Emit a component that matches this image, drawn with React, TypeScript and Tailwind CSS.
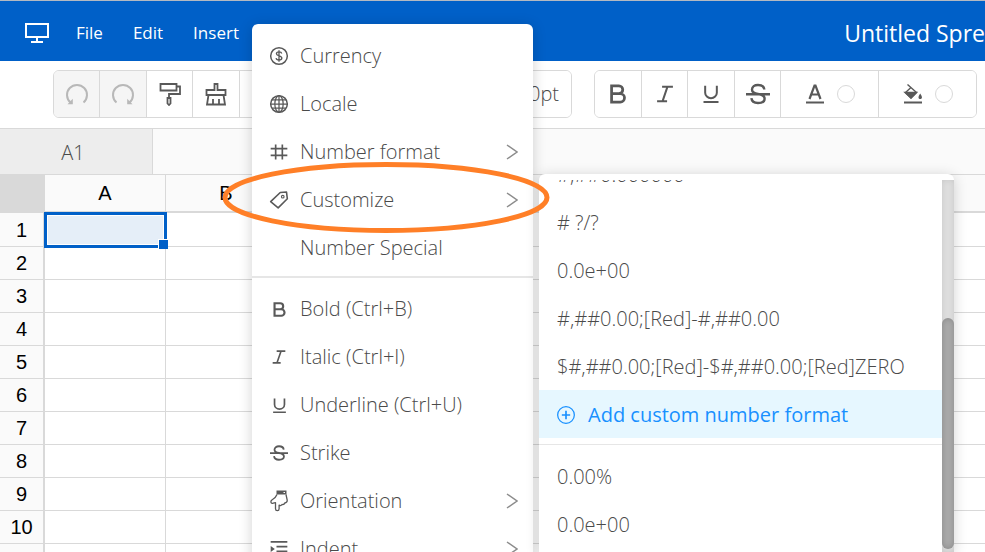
import type { ReactNode } from "react";
import clsx from "clsx";

const UI_FONT = "font-['Open_Sans','Noto_Sans',sans-serif]";
const GRID_FONT = "font-['Liberation_Sans',Arial,sans-serif]";

const COLUMNS = ["A", "B", "C", "D", "E", "F", "G"];
const ROWS = [1, 2, 3, 4, 5, 6, 7, 8, 9, 10];

/* ---------- icons ---------- */

function Icon({ size = 20, className, children }: { size?: number; className?: string; children: ReactNode }) {
  return (
    <svg
      width={size}
      height={size}
      viewBox="0 0 24 24"
      fill="none"
      stroke="currentColor"
      strokeWidth="1.8"
      className={clsx("shrink-0", className)}
      aria-hidden="true"
    >
      {children}
    </svg>
  );
}

const MonitorIcon = () => (
  <svg width="24" height="20" viewBox="0 0 24 20" fill="none" stroke="currentColor" strokeWidth="2" aria-hidden="true">
    <path d="M1 1h22v13H1zM12 14v5M6 19h12" />
  </svg>
);

const UndoIcon = () => (
  <Icon size={24}>
    <path d="M18.5 20.500a10 10 0 1 0-13 0" strokeWidth="2" />
    <path d="M7.800 16.800v5.400H2.500z" fill="currentColor" stroke="none" />
  </Icon>
);

const RedoIcon = () => (
  <Icon size={24}>
    <path d="M5.500 20.500a10 10 0 1 1 13 0" strokeWidth="2" />
    <path d="M16.200 16.800v5.400h5.300z" fill="currentColor" stroke="none" />
  </Icon>
);

const RollerIcon = () => (
  <Icon size={24}>
    <path d="M2.500 2h16v6.500h-16zM18.500 4.500H22V12H11v4M9.500 16h3v5.500l-1.500 1.500-1.500-1.500z" />
  </Icon>
);

const BrushIcon = () => (
  <Icon size={24}>
    <path d="M10.500 2h3v6h8v5h-19V8h8zM4.500 13L3 22.500h18L19.500 13M9 22v-5M15 22v-5" />
  </Icon>
);

const BoldIcon = ({ size }: { size?: number }) => (
  <Icon size={size}>
    <path d="M5 3.200h8a4.200 4.200 0 0 1 0 8.400H5zM5 11.600h9.500a4.600 4.600 0 0 1 0 9.200H5z" strokeWidth="3" />
  </Icon>
);

const ItalicIcon = ({ size }: { size?: number }) => (
  <Icon size={size}>
    <path d="M8.500 3.200h13M2.500 20.800h12M15 3.200L9 20.800" strokeWidth="2.400" />
  </Icon>
);

const UnderlineIcon = ({ size }: { size?: number }) => (
  <Icon size={size}>
    <path d="M5 2v8.500a7 6.500 0 0 0 14 0V2M3 21.500h18" strokeWidth="2.400" />
  </Icon>
);

const StrikeIcon = ({ size }: { size?: number }) => (
  <Icon size={size}>
    <path
      d="M18.300 7.500C18 4.500 15.500 3 12 3S6 4.600 6 7.600s3 4 6 4.400 6.600 1.700 6.600 4.700S15.500 21 12 21s-6.300-1.500-6.600-4.800M0 12.200h24"
      strokeWidth="2.400"
    />
  </Icon>
);

const FontColorIcon = () => (
  <svg width="20" height="20" viewBox="0 0 20 20" fill="none" stroke="currentColor" strokeWidth="2.200" aria-hidden="true">
    <path d="M4.500 15L9.500 1.500h1L15.500 15M6 10.500h8M1 18.500h18" />
  </svg>
);

const FillIcon = () => (
  <svg width="20" height="20" viewBox="0 0 20 20" fill="none" stroke="currentColor" strokeWidth="1.400" aria-hidden="true">
    <path d="M4.500.500l9 8-5.500 5.500-5.500-5.500 5.500-5" />
    <path d="M2 8.500h11.500L8 14z" fill="currentColor" />
    <path d="M17.200 9.500c2.400 3.400 2.200 5.500 0 5.500s-2.400-2.100 0-5.500z" fill="currentColor" stroke="none" />
    <path d="M1 18.500h18" strokeWidth="2.200" />
  </svg>
);

const CurrencyIcon = () => (
  <Icon>
    <circle cx="12" cy="12" r="10" />
    <path d="M15.300 9c-.3-1.400-1.500-2-3.300-2s-3.100.8-3.100 2.300c0 3.300 6.500 1.700 6.500 5.100 0 1.600-1.400 2.500-3.400 2.500s-3.300-.8-3.500-2.300M12 5v14" strokeWidth="1.600" />
  </Icon>
);

const GlobeIcon = () => (
  <Icon>
    <circle cx="12" cy="12" r="10" />
    <ellipse cx="12" cy="12" rx="5" ry="10" strokeWidth="1.500" />
    <path d="M12 2v20M2 12h20M3.500 7h17M3.500 17h17" strokeWidth="1.500" />
  </Icon>
);

const HashIcon = () => (
  <Icon>
    <path d="M8 3v18M16 3v18M2 8h20M2 16h20" strokeWidth="2" />
  </Icon>
);

const TagIcon = () => (
  <Icon>
    <path d="M13.500 3l7.500-.5 1 8L11 21.500 2 14z" strokeWidth="1.900" strokeLinejoin="round" />
    <circle cx="16.500" cy="8" r="1.600" strokeWidth="1.300" />
  </Icon>
);

const OrientationIcon = () => (
  <svg width="18" height="22" viewBox="0 0 18 22" fill="none" stroke="currentColor" aria-hidden="true">
    <path d="M6.500.500h10v4h-10z" fill="currentColor" stroke="none" />
    <path d="M13.500 2.500h1.500" stroke="white" />
    <path
      d="M7 4.500C6 7 5 8.300 2.200 9.800.2 11 .700 13.500 2.500 13.300c1.300-.1 2-.6 3-.7v6.200c0 2.500 3.600 2.500 3.600 0v-3.600c1 .5 2.400.2 2.900-.7 1.300.3 2.400-.3 2.800-1.500 1.400-.3 2.500-1.200 2.400-2.800L16 4.500"
      strokeWidth="1.300"
      strokeLinejoin="round"
    />
  </svg>
);

const IndentIcon = () => (
  <Icon>
    <path d="M2 3.500h20M9 9.200h13M9 14.800h13M2 20.500h20" strokeWidth="2" />
    <path d="M2 8.500l5 3.500-5 3.500z" fill="currentColor" stroke="none" />
  </Icon>
);

const AddIcon = () => (
  <Icon>
    <circle cx="12" cy="12" r="10" strokeWidth="1.500" />
    <path d="M12 7v10M7 12h10" strokeWidth="2" />
  </Icon>
);

const Chevron = () => (
  <svg width="12" height="16" viewBox="0 0 12 16" fill="none" stroke="#8c8c8c" strokeWidth="1.500" aria-hidden="true">
    <path d="M1 1l10 7-10 7" />
  </svg>
);

/* ---------- header and toolbar ---------- */

function Header() {
  return (
    <header className="flex h-[61px] shrink-0 items-center overflow-hidden border-t border-[#b3b9c2] bg-[#0060c8] pl-[25px] pt-1 text-white">
      <MonitorIcon />
      <nav className="ml-[27px] flex gap-[30px] text-[17px]">
        {["File", "Edit", "Insert"].map((name) => (
          <button key={name} type="button">
            {name}
          </button>
        ))}
      </nav>
      <h1 className="ml-auto shrink-0 whitespace-nowrap text-[23px]">Untitled Spre</h1>
    </header>
  );
}

function ToolButton({
  label,
  width = "w-[47px]",
  disabled,
  children,
}: {
  label: string;
  width?: string;
  disabled?: boolean;
  children?: ReactNode;
}) {
  return (
    <button
      type="button"
      aria-label={label}
      disabled={disabled}
      className={clsx(
        "flex shrink-0 items-center justify-center gap-3 border-r border-[#d9d9d9] last:border-r-0",
        width,
        disabled ? "bg-[#f5f5f5] text-[#b8b8b8]" : "bg-white text-[#595959]"
      )}
    >
      {children}
    </button>
  );
}

const Swatch = () => <span className="h-[18px] w-[18px] rounded-full border border-[#d9d9d9]" />;

function Toolbar() {
  const group = "flex h-12 shrink-0 overflow-hidden rounded-md border border-[#d9d9d9]";
  return (
    <div className="flex h-[68px] shrink-0 items-center gap-[22px] overflow-hidden border-b border-[#d9d9d9] bg-white pb-px pl-[53px]">
      <div className={group}>
        <ToolButton label="Undo" width="w-[46px]" disabled>
          <UndoIcon />
        </ToolButton>
        <ToolButton label="Redo" disabled>
          <RedoIcon />
        </ToolButton>
        <ToolButton label="Copy format" width="w-[46px]">
          <RollerIcon />
        </ToolButton>
        <ToolButton label="Clear format">
          <BrushIcon />
        </ToolButton>
        <ToolButton label="Font family" width="w-[230px]" />
        <button type="button" className="w-[101px] bg-white pr-3 text-right text-xl font-light text-[#4a4a4a]">
          10pt
        </button>
      </div>
      <div className={group}>
        <ToolButton label="Bold">
          <BoldIcon size={22} />
        </ToolButton>
        <ToolButton label="Italic" width="w-[46px]">
          <ItalicIcon size={20} />
        </ToolButton>
        <ToolButton label="Underline">
          <UnderlineIcon size={20} />
        </ToolButton>
        <ToolButton label="Strike" width="w-[46px]">
          <StrikeIcon size={24} />
        </ToolButton>
        <ToolButton label="Font color" width="w-[98px]">
          <FontColorIcon />
          <Swatch />
        </ToolButton>
        <ToolButton label="Fill color" width="w-[97px]">
          <FillIcon />
          <Swatch />
        </ToolButton>
      </div>
    </div>
  );
}

/* ---------- sheet ---------- */

function FormulaBar() {
  return (
    <div className="flex h-[46px] shrink-0 border-b border-[#d9d9d9] bg-[#fafafa]">
      <input
        aria-label="Cell reference"
        defaultValue="A1"
        className="w-[153px] border-r border-[#d9d9d9] bg-[#ededed] pr-1.5 pt-0.5 text-center text-xl font-light text-[#4a4a4a] outline-none"
      />
      <input aria-label="Formula" className="min-w-0 flex-1 bg-transparent px-3 text-xl outline-none" />
    </div>
  );
}

function Sheet() {
  return (
    <div className={clsx("min-h-0 flex-1 overflow-hidden bg-white", GRID_FONT)}>
      <table className="w-full min-w-[1013px] table-fixed border-separate border-spacing-0 text-xl leading-6 text-black">
        <thead>
          <tr className="h-[38px]">
            <th className="w-[45px] border-b-2 border-r-2 border-[#d9d9d9] bg-[#d9d9d9] p-0" />
            {COLUMNS.map((c) => (
              <th
                key={c}
                scope="col"
                className="w-[121px] border-b-2 border-r border-[#d9d9d9] bg-[#fafafa] p-0 font-normal last:w-auto"
              >
                {c}
              </th>
            ))}
          </tr>
        </thead>
        <tbody>
          {ROWS.map((r) => (
            <tr key={r} className={r === 1 ? "h-[34px]" : "h-[33px]"}>
              <th scope="row" className="border-b border-r-2 border-[#d9d9d9] bg-[#fafafa] p-0 font-normal">
                {r}
              </th>
              {COLUMNS.map((c) => (
                <td key={c} className="relative border-b border-r border-[#d9d9d9] p-0">
                  {c === "A" && r === 1 && <Selection />}
                </td>
              ))}
            </tr>
          ))}
          {/* row that runs off the bottom of the window */}
          <tr className="h-[33px]">
            <th className="border-r-2 border-[#d9d9d9] bg-[#fafafa]" />
            {COLUMNS.map((c) => (
              <td key={c} className="border-r border-[#d9d9d9]" />
            ))}
          </tr>
        </tbody>
      </table>
    </div>
  );
}

function Selection() {
  return (
    <div className="absolute -bottom-0.5 -left-px -right-0.5 -top-px z-10 border-[3px] border-[#0060c8] bg-white p-px">
      <div className="h-full bg-[#e5eef8]" />
      <span className="absolute -bottom-1 -right-1 h-[10px] w-[10px] border-l border-t border-white bg-[#0060c8]" />
    </div>
  );
}

/* ---------- context menu ---------- */

type Item = { label: string; icon?: ReactNode; sub?: boolean };

const NUMBER_ITEMS: Item[] = [
  { label: "Currency", icon: <CurrencyIcon /> },
  { label: "Locale", icon: <GlobeIcon /> },
  { label: "Number format", icon: <HashIcon />, sub: true },
  { label: "Customize", icon: <TagIcon />, sub: true },
  { label: "Number Special" },
];

const STYLE_ITEMS: Item[] = [
  { label: "Bold (Ctrl+B)", icon: <BoldIcon size={17} /> },
  { label: "Italic (Ctrl+I)", icon: <ItalicIcon size={16} /> },
  { label: "Underline (Ctrl+U)", icon: <UnderlineIcon size={17} /> },
  { label: "Strike", icon: <StrikeIcon size={18} /> },
  { label: "Orientation", icon: <OrientationIcon />, sub: true },
  { label: "Indent", icon: <IndentIcon />, sub: true },
];

function MenuItem({ label, icon, sub }: Item) {
  return (
    <button type="button" role="menuitem" className="flex h-12 w-full items-center pl-4 pr-[15px] text-left">
      <span className="flex w-[22px] shrink-0 justify-center text-[#595959]">{icon}</span>
      <span className="ml-2.5 flex-1 whitespace-nowrap">{label}</span>
      {sub && <Chevron />}
    </button>
  );
}

const panel = "absolute overflow-hidden rounded-md bg-white text-xl font-light text-[#4a4a4a] shadow-[0_2px_14px_rgba(0,0,0,0.18)]";

function FormatMenu() {
  return (
    <div role="menu" aria-label="Format" className={clsx(panel, "left-[252px] top-6 z-20 w-[281px] pt-2")}>
      {NUMBER_ITEMS.map((item) => (
        <MenuItem key={item.label} {...item} />
      ))}
      <hr className="mb-[7px] mt-1 h-0.5 border-0 bg-[#e6e6e6]" />
      {STYLE_ITEMS.map((item) => (
        <MenuItem key={item.label} {...item} />
      ))}
    </div>
  );
}

function FormatOption({ label }: { label: string }) {
  return (
    <button
      type="button"
      role="menuitem"
      className="flex h-12 w-full shrink-0 items-center whitespace-nowrap pl-[18px] pt-0.5"
    >
      {label}
    </button>
  );
}

function CustomizeMenu() {
  return (
    <div
      role="menu"
      aria-label="Customize"
      className={clsx(panel, "bottom-0 left-[539px] top-[174px] z-20 flex w-[415px] rounded-b-none pt-1.5")}
    >
      <div className="flex-1 overflow-hidden">
        {/* list is scrolled, so the first entry is mostly cut off */}
        <div className="flex h-[18px] flex-col justify-end overflow-hidden">
          <FormatOption label="#,##0.000000" />
        </div>
        <FormatOption label="# ?/?" />
        <FormatOption label="0.0e+00" />
        <FormatOption label="#,##0.00;[Red]-#,##0.00" />
        <FormatOption label="$#,##0.00;[Red]-$#,##0.00;[Red]ZERO" />
        <button
          type="button"
          role="menuitem"
          className="flex h-12 w-full items-center gap-3 bg-[#e6f7ff] pl-[17px] pt-0.5 font-normal text-[#1890ff]"
        >
          <AddIcon />
          Add custom number format
        </button>
        <hr className="mb-[7px] mt-1.5 border-[#e6e6e6]" />
        <FormatOption label="0.00%" />
        <FormatOption label="0.0e+00" />
      </div>
      <div className="flex w-3 flex-col justify-end bg-[#dedede] pb-[3px] shadow-[inset_0_0_6px_rgba(0,0,0,0.1)]">
        <div className="h-[231px] rounded-md bg-[#aaaaaa] shadow-[inset_0_0_6px_rgba(0,0,0,0.2)]" />
      </div>
    </div>
  );
}

export default function App() {
  return (
    <div className={clsx("relative flex h-screen flex-col overflow-hidden bg-white", UI_FONT)}>
      <Header />
      <Toolbar />
      <FormulaBar />
      <Sheet />
      <FormatMenu />
      <CustomizeMenu />
      {/* highlight ring around the Customize entry */}
      <svg
        className="pointer-events-none absolute left-[221px] top-[161px] z-30"
        width="330"
        height="74"
        fill="none"
        aria-hidden="true"
      >
        <ellipse cx="165" cy="36.500" rx="161" ry="33" stroke="#ff7f27" strokeWidth="5" />
      </svg>
    </div>
  );
}
